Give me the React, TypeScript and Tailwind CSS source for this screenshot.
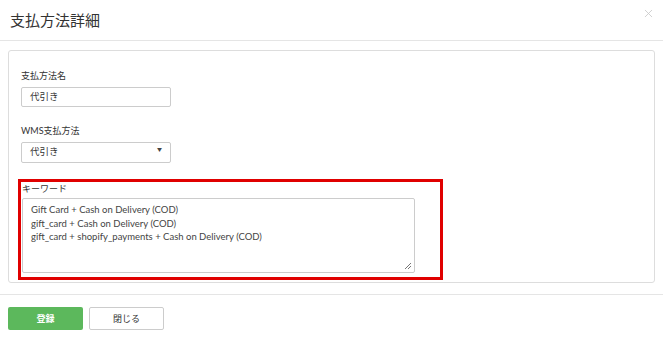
import { X } from 'lucide-react'

const KEYWORDS = [
  'Gift Card + Cash on Delivery (COD)',
  'gift_card + Cash on Delivery (COD)',
  'gift_card + shopify_payments + Cash on Delivery (COD)',
]

export default function App() {
  return (
    <div
      className="w-[663px] h-[338px] bg-white text-[#333] overflow-hidden"
      style={{ fontFamily: 'Lato, "Noto Sans CJK JP", sans-serif' }}
    >
      {/* Header */}
      <div className="h-[41px] flex items-center justify-between pl-[10px] pr-[8px] border-b border-[#e5e5e5]">
        <h2 className="text-[15px] leading-none text-[#333]">支払方法詳細</h2>
        <X className="w-[13px] h-[13px] text-[#c8c8c8] -mt-[14px]" strokeWidth={1.5} />
      </div>

      {/* Body */}
      <div className="px-[8px] pt-[9px] pb-[11px]">
        <div className="border border-[#ddd] rounded-[3px] pt-[19px] pb-[2px] px-[9px]">
          <div className="px-[3px]">
            <label className="block text-[9px] leading-[12px] mb-[5px]">支払方法名</label>
            <div className="w-[150px] h-[20px] border border-[#ccc] rounded-[2px] flex items-center px-[8px] text-[9.5px]">
              代引き
            </div>

            <label className="block text-[9px] leading-[12px] mt-[18px] mb-[5px]">WMS支払方法</label>
            <div className="w-[150px] h-[21px] border border-[#ccc] rounded-[2px] flex items-center justify-between px-[8px] text-[9.5px]">
              <span>代引き</span>
              <span className="text-[5px] text-[#444] -mt-[5px]">▼</span>
            </div>
          </div>

          {/* Keyword (highlighted) */}
          <div className="mt-[16px] w-[425px] border-[3px] border-[#e00000] pt-[1px] pb-[4px] px-[1px]">
            <label className="block text-[9px] leading-[12px] mb-[3px]">キーワード</label>
            <div className="relative w-[393px] h-[75px] border border-[#ccc] rounded-[2px] px-[8px] py-[4px] text-[9.5px] leading-[13.5px] text-[#444]">
              {KEYWORDS.map((k) => (
                <div key={k}>{k}</div>
              ))}
              <svg className="absolute right-[2px] bottom-[2px]" width="8" height="8" viewBox="0 0 8 8">
                <path d="M7 1 L1 7 M7 4 L4 7" stroke="#777" strokeWidth="1" />
              </svg>
            </div>
          </div>
        </div>
      </div>

      {/* Footer */}
      <div className="border-t border-[#e5e5e5] px-[8px] pt-[12px] flex gap-[6px]">
        <button className="w-[75px] h-[23px] rounded-[2px] bg-[#5cb85c] text-white text-[9px] font-bold">
          登録
        </button>
        <button className="w-[75px] h-[23px] rounded-[2px] border border-[#ccc] bg-white text-[#333] text-[9px]">
          閉じる
        </button>
      </div>
    </div>
  )
}
